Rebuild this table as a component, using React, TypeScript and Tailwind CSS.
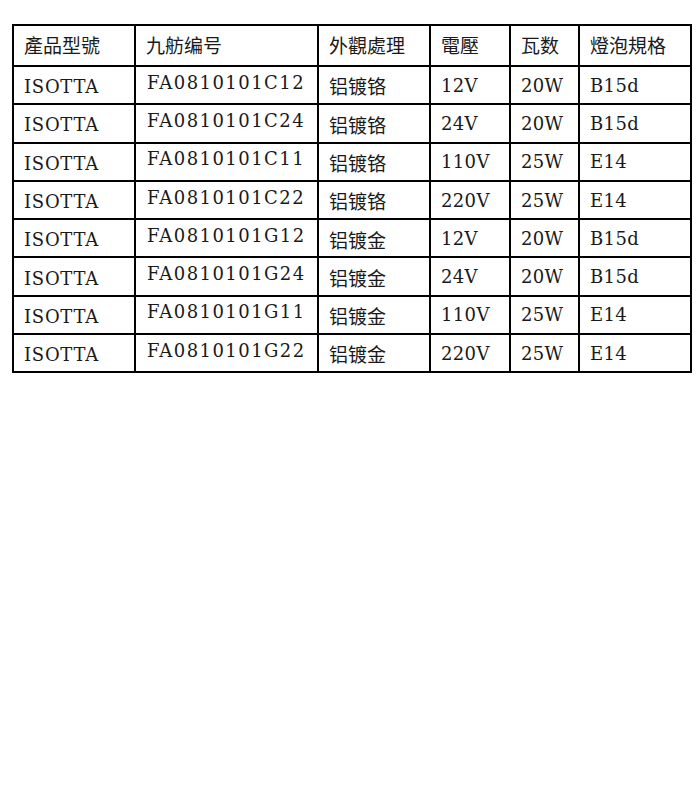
const headers = ['產品型號', '九舫编号', '外觀處理', '電壓', '瓦数', '燈泡規格'];

const rows = [
  ['ISOTTA', 'FA0810101C12', '铝镀铬', '12V', '20W', 'B15d'],
  ['ISOTTA', 'FA0810101C24', '铝镀铬', '24V', '20W', 'B15d'],
  ['ISOTTA', 'FA0810101C11', '铝镀铬', '110V', '25W', 'E14'],
  ['ISOTTA', 'FA0810101C22', '铝镀铬', '220V', '25W', 'E14'],
  ['ISOTTA', 'FA0810101G12', '铝镀金', '12V', '20W', 'B15d'],
  ['ISOTTA', 'FA0810101G24', '铝镀金', '24V', '20W', 'B15d'],
  ['ISOTTA', 'FA0810101G11', '铝镀金', '110V', '25W', 'E14'],
  ['ISOTTA', 'FA0810101G22', '铝镀金', '220V', '25W', 'E14'],
];

const widths = ['w-[122px]', 'w-[183px]', 'w-[112px]', 'w-[80px]', 'w-[69px]', 'w-[112px]'];

export default function App() {
  return (
    <div className="min-h-[800px] bg-white pl-3 pt-6 text-[#1a1a1a] font-['DejaVu_Serif','Noto_Sans_CJK_SC',serif]">
      <table className="w-[678px] table-fixed border-collapse border-2 border-black">
        <thead>
          <tr className="h-[41px]">
            {headers.map((h, i) => (
              <th
                key={h}
                className={`${widths[i]} border-2 border-black px-[10px] text-left align-middle text-[19px] font-normal font-['Noto_Sans_CJK_TC',sans-serif]`}
              >
                {h}
              </th>
            ))}
          </tr>
        </thead>
        <tbody>
          {rows.map((r, ri) => (
            <tr key={ri} className="h-[38.3px]">
              <td className="border-2 border-black px-[10px] pt-[3px] text-[18px] tracking-[0.04em]">{r[0]}</td>
              <td className="border-2 border-black px-[11px] pb-[6px] text-[18px] tracking-[0.08em]">{r[1]}</td>
              <td className="border-2 border-black px-[10px] pt-[3px] text-[19px] font-['Noto_Sans_CJK_SC',sans-serif]">
                {r[2]}
              </td>
              <td className="border-2 border-black px-[10px] text-[18px] tracking-[0.02em]">{r[3]}</td>
              <td className="border-2 border-black px-[10px] text-[18px] tracking-[0.02em]">{r[4]}</td>
              <td className="border-2 border-black px-[10px] text-[18px] tracking-[0.02em]">{r[5]}</td>
            </tr>
          ))}
        </tbody>
      </table>
    </div>
  );
}
